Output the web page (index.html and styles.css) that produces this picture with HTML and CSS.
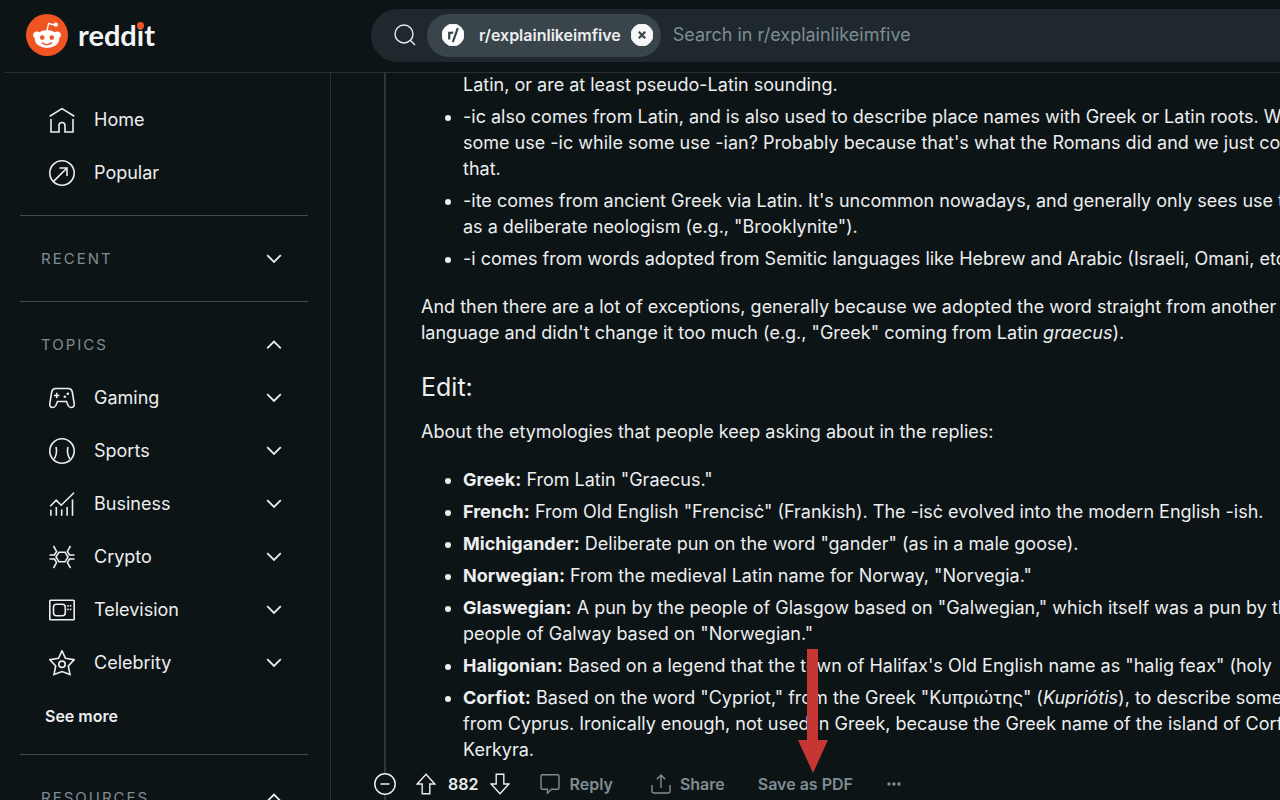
FILE: index.html
```html
<!DOCTYPE html>
<html lang="en">
<head>
<meta charset="utf-8">
<title>r/explainlikeimfive</title>
<link rel="stylesheet" href="styles.css">
</head>
<body>
<svg class="defs" aria-hidden="true">
  <symbol id="down" viewBox="0 0 16 16"><path d="M1.200 4.200 8 11l6.800-6.800"/></symbol>
  <symbol id="up" viewBox="0 0 16 16"><path d="M1.200 11.400 8 4.600l6.800 6.800"/></symbol>
</svg>
<header class="topbar">
  <a class="brand" href="#">
    <svg class="brand-mark" viewBox="0 0 42 42" aria-hidden="true">
      <circle cx="21" cy="21" r="21" fill="#f05423"/>
      <g fill="#fff">
        <circle cx="10.800" cy="21" r="3.600"/><circle cx="31.200" cy="21" r="3.600"/>
        <ellipse cx="21" cy="25" rx="12.200" ry="9"/>
        <circle cx="29.800" cy="10.700" r="2.100"/>
      </g>
      <path d="M21 17l1.500-7.500 7 1.500" fill="none" stroke="#fff" stroke-width="1.300"/>
      <circle cx="16.200" cy="23.600" r="2.300" fill="#f05423"/><circle cx="25.800" cy="23.600" r="2.300" fill="#f05423"/>
      <path d="M16.300 28.900q4.700 3.400 9.400 0" fill="none" stroke="#f05423" stroke-width="1.300" stroke-linecap="round"/>
    </svg>
    <span class="wordmark">redd<span class="dotted">i</span>t</span>
  </a>
  <form class="search">
    <svg class="search-icon" viewBox="0 0 22 22" aria-hidden="true"><circle cx="10" cy="10" r="9"/><path d="m16.500 16.500 4.500 4.500"/></svg>
    <span class="chip">
      <svg class="chip-icon" viewBox="0 0 22 22" aria-hidden="true"><circle cx="11" cy="11" r="11" fill="#fff"/><path d="M7.200 15.500V7.700M7.200 11.500q0-3.200 4-2.800M10.800 18.200l5-14" fill="none" stroke="#39454b" stroke-width="2.200"/></svg>
      <span>r/explainlikeimfive</span>
      <button class="clear" type="button" aria-label="Remove community filter"><svg viewBox="0 0 22 22"><circle cx="11" cy="11" r="11" fill="#f5f7f8"/><path d="m7.800 7.800 6.400 6.400m0-6.400-6.400 6.400" stroke="#39454b" stroke-width="2.200"/></svg></button>
    </span>
    <input type="search" aria-label="Search in r/explainlikeimfive" placeholder="Search in r/explainlikeimfive">
  </form>
</header>
<div class="page">
  <nav class="sidebar">
    <section class="group first">
      <a class="row" href="#"><svg class="icon" viewBox="0 0 26 26"><path d="M.7 9.200 13 1.600l12.300 7.600M2 12v13h8v-6.500a3 3 0 0 1 6 0V25h8V12"/></svg>Home</a>
      <a class="row" href="#"><svg class="icon" viewBox="0 0 26 26"><circle cx="13" cy="13" r="12.200"/><path d="M4.600 21.400 18 8M10.500 8H18v8"/></svg>Popular</a>
    </section>
    <section class="group">
      <button class="row heading" type="button">RECENT<svg class="chevron"><use href="#down"/></svg></button>
    </section>
    <section class="group topics">
      <button class="row heading" type="button">TOPICS<svg class="chevron"><use href="#up"/></svg></button>
      <button class="row" type="button"><svg class="icon" viewBox="0 0 26 26"><path d="M6.500 3.500h13q3 0 3.800 3.500l1.900 11.500q.3 4-3 4-2 0-3-2l-1.700-4h-9l-1.700 4q-1 2-3 2-3.300 0-3-4L2.700 7q.8-3.500 3.800-3.500zM5 10.500h5.400M7.700 7.800v5.400"/><g class="fill"><circle cx="18.800" cy="8.700" r="1.300"/><circle cx="15.800" cy="11.700" r="1.300"/></g></svg>Gaming<svg class="chevron"><use href="#down"/></svg></button>
      <button class="row" type="button"><svg class="icon" viewBox="0 0 26 26"><circle cx="13" cy="13" r="12.200"/><path d="M7 9q1.700 6-1.800 11.800M19 9q-1.700 6 1.800 11.800"/></svg>Sports<svg class="chevron"><use href="#down"/></svg></button>
      <button class="row" type="button"><svg class="icon" viewBox="0 0 26 26"><path d="m1.200 15.200 6-6 5 5L25 1.800M1.900 18.800v6M7.300 16v8.800M12.700 18.500v6.300M18.100 16v8.800M23.500 8.500v16.300"/></svg>Business<svg class="chevron"><use href="#down"/></svg></button>
      <button class="row" type="button"><svg class="icon" viewBox="0 0 26 26"><path d="m10 8.200-3 4.800 3 4.800h6l3-4.800-3-4.800zM4.500 2 7.600 7.400 5.500 11H.5M4.500 24l3.100-5.400L5.500 15H.5M21.500 2l-3.100 5.400 2.100 3.600h5M21.500 24l-3.100-5.400 2.100-3.600h5"/></svg>Crypto<svg class="chevron"><use href="#down"/></svg></button>
      <button class="row" type="button"><svg class="icon" viewBox="0 0 26 26"><rect x=".8" y="3.300" width="24.400" height="19.400" rx=".8"/><rect x="4.500" y="7.200" width="11.800" height="11.600" rx="3"/><g class="fill"><rect x="18.200" y="8" width="1.600" height="1.600"/><rect x="20.800" y="8" width="1.600" height="1.600"/><rect x="20.800" y="11.600" width="1.600" height="1.600"/><rect x="18.200" y="11.600" width="1.600" height="1.600"/></g></svg>Television<svg class="chevron"><use href="#down"/></svg></button>
      <button class="row" type="button"><svg class="icon" viewBox="0 0 26 26"><path d="m13 .8 3.500 7.500 8.700 1.300-5.900 6.300 1.700 8.700-8-3.100-8 3.100 1.700-8.700L.8 9.600l8.700-1.300z"/><circle cx="13" cy="14.300" r="3.200"/></svg>Celebrity<svg class="chevron"><use href="#down"/></svg></button>
      <button class="row more" type="button">See more</button>
    </section>
    <section class="group">
      <button class="row heading" type="button">RESOURCES<svg class="chevron"><use href="#up"/></svg></button>
    </section>
  </nav>
  <main class="thread">
    <article class="comment">
      <ul>
        <li class="continued">Latin, or are at least pseudo-Latin sounding.</li>
        <li>-ic also comes from Latin, and is also used to describe place names with Greek or Latin roots. Why<br>some use -ic while some use -ian? Probably because that's what the Romans did and we just copied<br>that.</li>
        <li>-ite comes from ancient Greek via Latin. It's uncommon nowadays, and generally only sees use today<br>as a deliberate neologism (e.g., "Brooklynite").</li>
        <li>-i comes from words adopted from Semitic languages like Hebrew and Arabic (Israeli, Omani, etc.).</li>
      </ul>
      <p>And then there are a lot of exceptions, generally because we adopted the word straight from another<br>language and didn't change it too much (e.g., "Greek" coming from Latin <em>graecus</em>).</p>
      <h2>Edit:</h2>
      <p>About the etymologies that people keep asking about in the replies:</p>
      <ul>
        <li><strong>Greek:</strong> From Latin "Graecus."</li>
        <li><strong>French:</strong> From Old English "Frencisċ" (Frankish). The -isċ evolved into the modern English -ish.</li>
        <li><strong>Michigander:</strong> Deliberate pun on the word "gander" (as in a male goose).</li>
        <li><strong>Norwegian:</strong> From the medieval Latin name for Norway, "Norvegia."</li>
        <li><strong>Glaswegian:</strong> A pun by the people of Glasgow based on "Galwegian," which itself was a pun by the<br>people of Galway based on "Norwegian."</li>
        <li><strong>Haligonian:</strong> Based on a legend that the town of Halifax's Old English name as "halig feax" (holy</li>
        <li><strong>Corfiot:</strong> Based on the word "Cypriot," from the Greek "Κυπριώτης" (<em>Kupriótis</em>), to describe someone<br>from Cyprus. Ironically enough, not used in Greek, because the Greek name of the island of Corfu<br>Kerkyra.</li>
      </ul>
    </article>
    <div class="actions">
      <button class="collapse" type="button" aria-label="Collapse thread"><svg viewBox="0 0 22 22"><circle cx="11" cy="11" r="10.200"/><path d="M6.500 11h9"/></svg></button>
      <div class="votes">
        <button type="button" aria-label="Upvote"><svg viewBox="0 0 20 22"><path d="M10 1.200 18.800 11h-5v9.800H6.200V11h-5z"/></svg></button>
        <span>882</span>
        <button type="button" aria-label="Downvote"><svg viewBox="0 0 20 22"><path d="M10 20.800 18.800 11h-5V1.200H6.200V11h-5z"/></svg></button>
      </div>
      <button class="action reply" type="button"><svg viewBox="0 0 20 22"><path d="M2.500 1.800h15q1.500 0 1.500 1.500v11.400q0 1.500-1.500 1.500h-6L7.500 20v-3.800h-5Q1 16.200 1 14.700V3.300q0-1.500 1.500-1.500z"/></svg>Reply</button>
      <button class="action share" type="button"><svg viewBox="0 0 20 22"><path d="M10 15V2M5.800 6.200 10 2l4.200 4.200M1 12v6q0 2 2 2h14q2 0 2-2v-6"/></svg>Share</button>
      <div class="save">
        <button class="action" type="button">Save as PDF</button>
        <svg class="pointer" viewBox="0 0 30 124" aria-hidden="true"><path d="M9 0h11v91h10L15 124 0 91h9z"/></svg>
      </div>
      <button class="dots" type="button" aria-label="More actions"><svg viewBox="0 0 14 4"><circle cx="2" cy="2" r="1.700"/><circle cx="7" cy="2" r="1.700"/><circle cx="12" cy="2" r="1.700"/></svg></button>
    </div>
  </main>
</div>
</body>
</html>
```
FILE: styles.css
```css
* { box-sizing: border-box; }
body {
  margin: 0;
  height: 100vh;
  display: flex;
  flex-direction: column;
  overflow: hidden;
  background: #0d1416;
  color: #eceeef;
  font: 18px/26px Inter, "Noto Sans", sans-serif;
}
button { border: 0; padding: 0; background: none; color: inherit; font: inherit; }
a { color: inherit; text-decoration: none; }
svg { display: block; flex: none; fill: none; stroke: currentColor; }
.defs { position: absolute; width: 0; height: 0; }

.topbar {
  flex: none;
  display: flex;
  align-items: center;
  height: 73px;
  margin-left: 4px;
  padding: 0 0 2px 22px;
  border-bottom: 1px solid #2a2f31;
}
.brand { display: flex; align-items: center; gap: 10px; width: 345px; }
.brand svg { stroke: none; width: 42px; height: 42px; }
.wordmark { font: 700 29px/42px Lato, sans-serif; color: #f4f5f5; }
.dotted { position: relative; }
.dotted::after {
  content: "";
  position: absolute;
  left: 0;
  top: 5px;
  width: 7px;
  height: 7px;
  border-radius: 50%;
  background: #f05423;
}
.search {
  flex: 1;
  display: flex;
  align-items: center;
  height: 53px;
  padding-left: 23px;
  border-radius: 27px 0 0 27px;
  background: #1e282d;
}
.search-icon { width: 22px; height: 22px; margin-right: 11px; stroke-width: 1.4; }
.chip {
  flex: none;
  display: flex;
  align-items: center;
  height: 43px;
  padding: 0 8px 0 15px;
  border-radius: 22px;
  background: #39454b;
  font-size: 16px;
  font-weight: 600;
}
.chip-icon { width: 22px; height: 22px; margin-right: 15px; }
.clear { margin-left: 10px; }
.clear svg { width: 22px; height: 22px; }
.search input {
  flex: 1;
  min-width: 0;
  padding: 0 0 0 12px;
  border: 0;
  outline: 0;
  background: none;
  color: inherit;
  font: inherit;
}
.search input::placeholder { color: #7f8d93; opacity: 1; }

.page { flex: 1; min-height: 0; display: grid; grid-template-columns: 331px minmax(0, 1fr); }
.sidebar { overflow: hidden; padding: 0 22px 0 20px; border-right: 1px solid #2a2f31; }
.group { padding: 16px 0; border-bottom: 1px solid #454a4c; }
.group.first { padding: 20px 0 16px; }
.group.topics { padding-bottom: 12px; }
.row {
  display: flex;
  align-items: center;
  width: 100%;
  height: 53px;
  padding: 0 26px 0 29px;
  text-align: left;
}
.icon { width: 26px; height: 26px; margin-right: 19px; stroke-width: 1.6; }
.fill { fill: currentColor; stroke: none; }
.chevron { width: 16px; height: 16px; margin-left: auto; stroke-width: 1.8; }
.heading { padding-left: 21px; color: #7f8d93; font-size: 15px; letter-spacing: 2px; }
.heading .chevron { color: #eceeef; }
.more { padding-left: 25px; font-size: 16px; font-weight: 600; }

.thread { position: relative; overflow: hidden; padding-left: 43px; }
.thread::before {
  content: "";
  position: absolute;
  top: 0;
  bottom: 0;
  left: 53px;
  width: 2px;
  background: #343536;
}
.comment { padding-left: 47px; white-space: nowrap; }
.comment ul { margin: 0 0 22px; padding-left: 42px; }
.comment ul:first-child { margin-top: -1px; }
.comment ul:last-child { margin-bottom: 0; }
.comment li + li { margin-top: 6px; }
.continued { list-style: none; }
.comment p { margin: 0 0 22px; }
.comment h2 { margin: 0 0 13px; font-size: 25px; font-weight: 400; line-height: 38px; }

.actions { display: flex; align-items: center; height: 42px; font-size: 16px; font-weight: 600; }
.collapse { position: relative; border-radius: 50%; background: #0d1416; }
.collapse svg { width: 22px; height: 22px; stroke-width: 1.5; }
.votes { display: flex; align-items: center; gap: 12px; margin: 0 30px 0 20px; }
.votes svg, .action svg { width: 20px; height: 22px; stroke-width: 1.4; }
.action { display: flex; align-items: center; gap: 9px; color: #7f8d93; }
.share { margin: 0 33px 0 38px; }
.save { position: relative; }
.pointer {
  position: absolute;
  left: 40px;
  bottom: 24px;
  width: 30px;
  height: 124px;
  fill: #c63632;
  stroke: none;
}
.dots { margin-left: 34px; color: #7f8d93; }
.dots svg { width: 14px; height: 4px; fill: currentColor; stroke: none; }
```
